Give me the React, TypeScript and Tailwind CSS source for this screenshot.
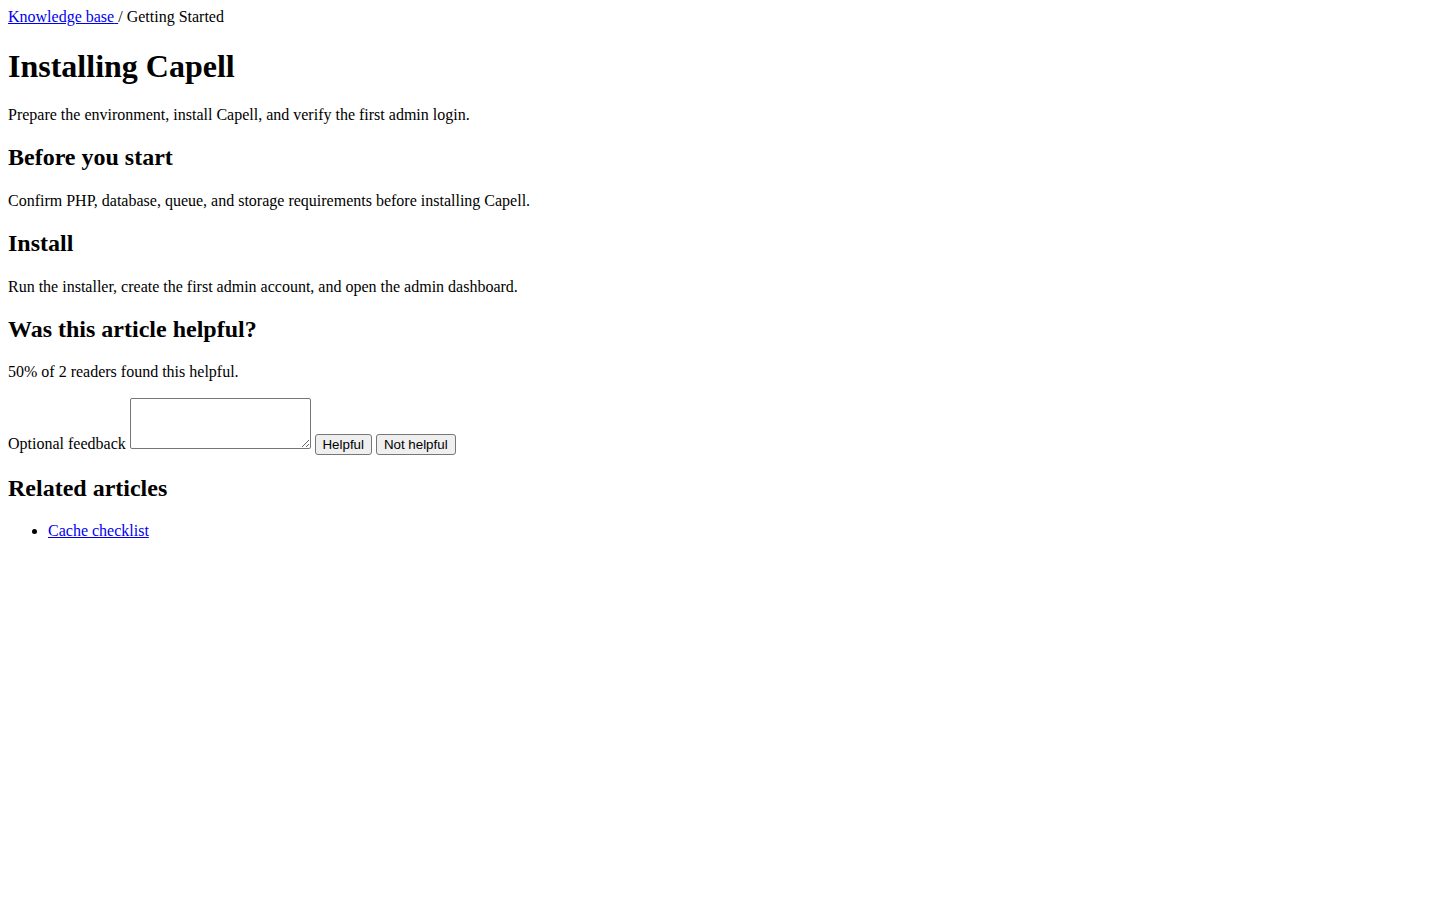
export default function App() {
  return (
    <div className="min-h-screen bg-white p-2 text-black font-['Liberation_Serif',serif] text-[16px] leading-[1.15]">
      {/* Breadcrumb */}
      <nav>
        <a href="#" className="text-[#0000ee] underline">
          Knowledge base{' '}
        </a>
        / Getting Started
      </nav>

      <h1 className="my-[21.44px] text-[32px] font-bold">Installing Capell</h1>
      <p className="my-4">Prepare the environment, install Capell, and verify the first admin login.</p>

      <h2 className="my-[19.92px] text-[24px] font-bold">Before you start</h2>
      <p className="my-4">Confirm PHP, database, queue, and storage requirements before installing Capell.</p>

      <h2 className="my-[19.92px] text-[24px] font-bold">Install</h2>
      <p className="my-4">Run the installer, create the first admin account, and open the admin dashboard.</p>

      <h2 className="my-[19.92px] text-[24px] font-bold">Was this article helpful?</h2>
      <p className="my-4">50% of 2 readers found this helpful.</p>

      <form onSubmit={(e) => e.preventDefault()}>
        <label htmlFor="feedback">Optional feedback</label>{' '}
        <textarea
          id="feedback"
          className="inline-block h-[51px] w-[181px] resize rounded-[2px] border border-[#767676] bg-white p-[2px] align-baseline font-['Liberation_Mono',monospace] text-[13.33px] leading-[normal]"
        />{' '}
        <button
          type="submit"
          className="inline-block h-[21px] w-[57px] rounded-[3px] border border-[#767676] bg-[#efefef] px-0 text-center align-baseline font-['Liberation_Sans',sans-serif] text-[13.33px] leading-[normal] text-black"
        >
          Helpful
        </button>{' '}
        <button
          type="submit"
          className="inline-block h-[21px] w-[80px] rounded-[3px] border border-[#767676] bg-[#efefef] px-0 text-center align-baseline font-['Liberation_Sans',sans-serif] text-[13.33px] leading-[normal] text-black"
        >
          Not helpful
        </button>
      </form>

      <h2 className="my-[19.92px] text-[24px] font-bold">Related articles</h2>
      <ul className="my-4 list-disc pl-10">
        <li>
          <a href="#" className="text-[#0000ee] underline">
            Cache checklist
          </a>
        </li>
      </ul>
    </div>
  );
}
